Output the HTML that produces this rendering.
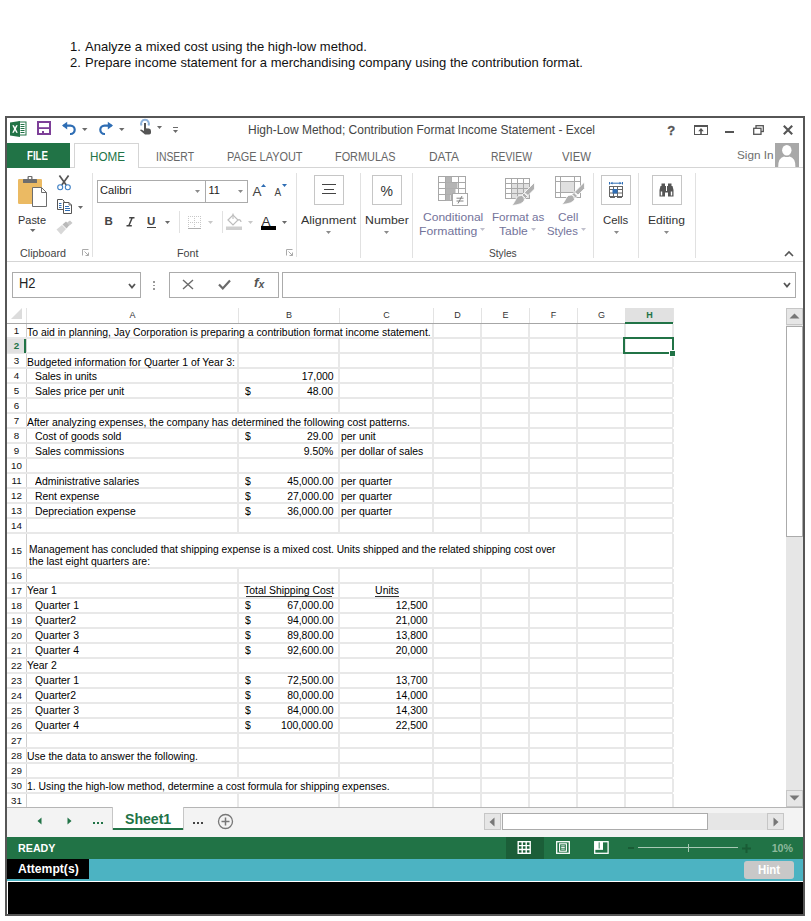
<!DOCTYPE html>
<html><head><meta charset="utf-8"><style>
html,body{margin:0;padding:0;}
body{width:811px;height:921px;position:relative;overflow:hidden;background:#fff;font-family:"Liberation Sans", sans-serif;color:#000;}
.t{position:absolute;white-space:nowrap;}
.r{position:absolute;}
svg.r{overflow:visible;}
</style></head><body>
<div class="t" style="left:70px;top:39.80px;font-size:13px;line-height:13px;color:#111;">1.</div>
<div class="t" style="left:85px;top:39.80px;font-size:13px;line-height:13px;color:#111;">Analyze a mixed cost using the high-low method.</div>
<div class="t" style="left:70px;top:55.80px;font-size:13px;line-height:13px;color:#111;">2.</div>
<div class="t" style="left:85px;top:55.80px;font-size:13px;line-height:13px;color:#111;">Prepare income statement for a merchandising company using the contribution format.</div>
<div class="r" style="left:5px;top:116px;width:800px;height:800px;box-sizing:border-box;border:2px solid #565656;background:#fff;"></div>
<div class="t" style="left:248px;top:123.84px;font-size:12px;line-height:12px;color:#444;transform:scaleX(0.9986);transform-origin:left top;">High-Low Method; Contribution Format Income Statement - Excel</div>
<div class="r" style="left:7px;top:167px;width:796px;height:1px;background:#d5d5d5;"></div>
<div class="r" style="left:7px;top:143px;width:63px;height:25px;background:#217346;"></div>
<div class="t" style="left:27px;top:150.34px;font-size:12px;line-height:12px;font-weight:bold;color:#fff;transform:scaleX(0.8077);transform-origin:left top;">FILE</div>
<div class="r" style="left:74px;top:143px;width:65px;height:25px;box-sizing:border-box;border:1px solid #d5d5d5;border-bottom:none;background:#fff;"></div>
<div class="t" style="left:89.5px;top:151.34px;font-size:12px;line-height:12px;color:#217346;transform:scaleX(0.9722);transform-origin:left top;">HOME</div>
<div class="t" style="left:155.5px;top:151.34px;font-size:12px;line-height:12px;color:#666;transform:scaleX(0.8676);transform-origin:left top;">INSERT</div>
<div class="t" style="left:226.8px;top:151.34px;font-size:12px;line-height:12px;color:#666;transform:scaleX(0.9105);transform-origin:left top;">PAGE LAYOUT</div>
<div class="t" style="left:335.3px;top:151.34px;font-size:12px;line-height:12px;color:#666;transform:scaleX(0.9072);transform-origin:left top;">FORMULAS</div>
<div class="t" style="left:428.8px;top:151.34px;font-size:12px;line-height:12px;color:#666;transform:scaleX(0.9922);transform-origin:left top;">DATA</div>
<div class="t" style="left:490.6px;top:151.34px;font-size:12px;line-height:12px;color:#666;transform:scaleX(0.8660);transform-origin:left top;">REVIEW</div>
<div class="t" style="left:562.2px;top:151.34px;font-size:12px;line-height:12px;color:#666;transform:scaleX(0.9455);transform-origin:left top;">VIEW</div>
<div class="r" style="left:7px;top:261px;width:796px;height:1px;background:#d5d5d5;"></div>
<div class="r" style="left:12px;top:272px;width:129px;height:26px;box-sizing:border-box;border:1px solid #ababab;background:#fff;"></div>
<div class="t" style="left:19.2px;top:276.15px;font-size:14px;line-height:14px;color:#222;transform:scaleX(0.9215);transform-origin:left top;">H2</div>
<div class="r" style="left:169px;top:272px;width:110px;height:26px;box-sizing:border-box;border:1px solid #ababab;background:#fff;"></div>
<div class="r" style="left:282px;top:272px;width:514px;height:26px;box-sizing:border-box;border:1px solid #ababab;background:#fff;"></div>
<div class="r" style="left:238px;top:308px;width:1px;height:15px;background:#e3e3e3;"></div>
<div class="r" style="left:339px;top:308px;width:1px;height:15px;background:#e3e3e3;"></div>
<div class="r" style="left:433px;top:308px;width:1px;height:15px;background:#e3e3e3;"></div>
<div class="r" style="left:481px;top:308px;width:1px;height:15px;background:#e3e3e3;"></div>
<div class="r" style="left:529px;top:308px;width:1px;height:15px;background:#e3e3e3;"></div>
<div class="r" style="left:577px;top:308px;width:1px;height:15px;background:#e3e3e3;"></div>
<div class="r" style="left:625px;top:308px;width:1px;height:15px;background:#e3e3e3;"></div>
<div class="r" style="left:673px;top:308px;width:1px;height:15px;background:#e3e3e3;"></div>
<div class="r" style="left:26px;top:308px;width:1px;height:15px;background:#e3e3e3;"></div>
<div class="r" style="left:26px;top:324px;width:1px;height:14px;background:#d0d0d0;"></div>
<div class="r" style="left:432px;top:324px;width:2px;height:13px;background:#e8e8e8;"></div>
<div class="r" style="left:480px;top:324px;width:2px;height:13px;background:#e8e8e8;"></div>
<div class="r" style="left:528px;top:324px;width:2px;height:13px;background:#e8e8e8;"></div>
<div class="r" style="left:576px;top:324px;width:2px;height:13px;background:#e8e8e8;"></div>
<div class="r" style="left:624px;top:324px;width:2px;height:13px;background:#e8e8e8;"></div>
<div class="r" style="left:672px;top:324px;width:2px;height:13px;background:#e8e8e8;"></div>
<div class="r" style="left:26px;top:339px;width:1px;height:14px;background:#d0d0d0;"></div>
<div class="r" style="left:237px;top:339px;width:2px;height:13px;background:#e8e8e8;"></div>
<div class="r" style="left:338px;top:339px;width:2px;height:13px;background:#e8e8e8;"></div>
<div class="r" style="left:432px;top:339px;width:2px;height:13px;background:#e8e8e8;"></div>
<div class="r" style="left:480px;top:339px;width:2px;height:13px;background:#e8e8e8;"></div>
<div class="r" style="left:528px;top:339px;width:2px;height:13px;background:#e8e8e8;"></div>
<div class="r" style="left:576px;top:339px;width:2px;height:13px;background:#e8e8e8;"></div>
<div class="r" style="left:624px;top:339px;width:2px;height:13px;background:#e8e8e8;"></div>
<div class="r" style="left:672px;top:339px;width:2px;height:13px;background:#e8e8e8;"></div>
<div class="r" style="left:26px;top:354px;width:1px;height:14px;background:#d0d0d0;"></div>
<div class="r" style="left:237px;top:354px;width:2px;height:13px;background:#e8e8e8;"></div>
<div class="r" style="left:338px;top:354px;width:2px;height:13px;background:#e8e8e8;"></div>
<div class="r" style="left:432px;top:354px;width:2px;height:13px;background:#e8e8e8;"></div>
<div class="r" style="left:480px;top:354px;width:2px;height:13px;background:#e8e8e8;"></div>
<div class="r" style="left:528px;top:354px;width:2px;height:13px;background:#e8e8e8;"></div>
<div class="r" style="left:576px;top:354px;width:2px;height:13px;background:#e8e8e8;"></div>
<div class="r" style="left:624px;top:354px;width:2px;height:13px;background:#e8e8e8;"></div>
<div class="r" style="left:672px;top:354px;width:2px;height:13px;background:#e8e8e8;"></div>
<div class="r" style="left:26px;top:369px;width:1px;height:14px;background:#d0d0d0;"></div>
<div class="r" style="left:237px;top:369px;width:2px;height:13px;background:#e8e8e8;"></div>
<div class="r" style="left:338px;top:369px;width:2px;height:13px;background:#e8e8e8;"></div>
<div class="r" style="left:432px;top:369px;width:2px;height:13px;background:#e8e8e8;"></div>
<div class="r" style="left:480px;top:369px;width:2px;height:13px;background:#e8e8e8;"></div>
<div class="r" style="left:528px;top:369px;width:2px;height:13px;background:#e8e8e8;"></div>
<div class="r" style="left:576px;top:369px;width:2px;height:13px;background:#e8e8e8;"></div>
<div class="r" style="left:624px;top:369px;width:2px;height:13px;background:#e8e8e8;"></div>
<div class="r" style="left:672px;top:369px;width:2px;height:13px;background:#e8e8e8;"></div>
<div class="r" style="left:26px;top:384px;width:1px;height:14px;background:#d0d0d0;"></div>
<div class="r" style="left:237px;top:384px;width:2px;height:13px;background:#e8e8e8;"></div>
<div class="r" style="left:338px;top:384px;width:2px;height:13px;background:#e8e8e8;"></div>
<div class="r" style="left:432px;top:384px;width:2px;height:13px;background:#e8e8e8;"></div>
<div class="r" style="left:480px;top:384px;width:2px;height:13px;background:#e8e8e8;"></div>
<div class="r" style="left:528px;top:384px;width:2px;height:13px;background:#e8e8e8;"></div>
<div class="r" style="left:576px;top:384px;width:2px;height:13px;background:#e8e8e8;"></div>
<div class="r" style="left:624px;top:384px;width:2px;height:13px;background:#e8e8e8;"></div>
<div class="r" style="left:672px;top:384px;width:2px;height:13px;background:#e8e8e8;"></div>
<div class="r" style="left:26px;top:399px;width:1px;height:14px;background:#d0d0d0;"></div>
<div class="r" style="left:237px;top:399px;width:2px;height:13px;background:#e8e8e8;"></div>
<div class="r" style="left:338px;top:399px;width:2px;height:13px;background:#e8e8e8;"></div>
<div class="r" style="left:432px;top:399px;width:2px;height:13px;background:#e8e8e8;"></div>
<div class="r" style="left:480px;top:399px;width:2px;height:13px;background:#e8e8e8;"></div>
<div class="r" style="left:528px;top:399px;width:2px;height:13px;background:#e8e8e8;"></div>
<div class="r" style="left:576px;top:399px;width:2px;height:13px;background:#e8e8e8;"></div>
<div class="r" style="left:624px;top:399px;width:2px;height:13px;background:#e8e8e8;"></div>
<div class="r" style="left:672px;top:399px;width:2px;height:13px;background:#e8e8e8;"></div>
<div class="r" style="left:26px;top:414px;width:1px;height:14px;background:#d0d0d0;"></div>
<div class="r" style="left:432px;top:414px;width:2px;height:13px;background:#e8e8e8;"></div>
<div class="r" style="left:480px;top:414px;width:2px;height:13px;background:#e8e8e8;"></div>
<div class="r" style="left:528px;top:414px;width:2px;height:13px;background:#e8e8e8;"></div>
<div class="r" style="left:576px;top:414px;width:2px;height:13px;background:#e8e8e8;"></div>
<div class="r" style="left:624px;top:414px;width:2px;height:13px;background:#e8e8e8;"></div>
<div class="r" style="left:672px;top:414px;width:2px;height:13px;background:#e8e8e8;"></div>
<div class="r" style="left:26px;top:429px;width:1px;height:14px;background:#d0d0d0;"></div>
<div class="r" style="left:237px;top:429px;width:2px;height:13px;background:#e8e8e8;"></div>
<div class="r" style="left:338px;top:429px;width:2px;height:13px;background:#e8e8e8;"></div>
<div class="r" style="left:432px;top:429px;width:2px;height:13px;background:#e8e8e8;"></div>
<div class="r" style="left:480px;top:429px;width:2px;height:13px;background:#e8e8e8;"></div>
<div class="r" style="left:528px;top:429px;width:2px;height:13px;background:#e8e8e8;"></div>
<div class="r" style="left:576px;top:429px;width:2px;height:13px;background:#e8e8e8;"></div>
<div class="r" style="left:624px;top:429px;width:2px;height:13px;background:#e8e8e8;"></div>
<div class="r" style="left:672px;top:429px;width:2px;height:13px;background:#e8e8e8;"></div>
<div class="r" style="left:26px;top:444px;width:1px;height:14px;background:#d0d0d0;"></div>
<div class="r" style="left:237px;top:444px;width:2px;height:13px;background:#e8e8e8;"></div>
<div class="r" style="left:338px;top:444px;width:2px;height:13px;background:#e8e8e8;"></div>
<div class="r" style="left:432px;top:444px;width:2px;height:13px;background:#e8e8e8;"></div>
<div class="r" style="left:480px;top:444px;width:2px;height:13px;background:#e8e8e8;"></div>
<div class="r" style="left:528px;top:444px;width:2px;height:13px;background:#e8e8e8;"></div>
<div class="r" style="left:576px;top:444px;width:2px;height:13px;background:#e8e8e8;"></div>
<div class="r" style="left:624px;top:444px;width:2px;height:13px;background:#e8e8e8;"></div>
<div class="r" style="left:672px;top:444px;width:2px;height:13px;background:#e8e8e8;"></div>
<div class="r" style="left:26px;top:459px;width:1px;height:14px;background:#d0d0d0;"></div>
<div class="r" style="left:237px;top:459px;width:2px;height:13px;background:#e8e8e8;"></div>
<div class="r" style="left:338px;top:459px;width:2px;height:13px;background:#e8e8e8;"></div>
<div class="r" style="left:432px;top:459px;width:2px;height:13px;background:#e8e8e8;"></div>
<div class="r" style="left:480px;top:459px;width:2px;height:13px;background:#e8e8e8;"></div>
<div class="r" style="left:528px;top:459px;width:2px;height:13px;background:#e8e8e8;"></div>
<div class="r" style="left:576px;top:459px;width:2px;height:13px;background:#e8e8e8;"></div>
<div class="r" style="left:624px;top:459px;width:2px;height:13px;background:#e8e8e8;"></div>
<div class="r" style="left:672px;top:459px;width:2px;height:13px;background:#e8e8e8;"></div>
<div class="r" style="left:26px;top:474px;width:1px;height:14px;background:#d0d0d0;"></div>
<div class="r" style="left:237px;top:474px;width:2px;height:13px;background:#e8e8e8;"></div>
<div class="r" style="left:338px;top:474px;width:2px;height:13px;background:#e8e8e8;"></div>
<div class="r" style="left:432px;top:474px;width:2px;height:13px;background:#e8e8e8;"></div>
<div class="r" style="left:480px;top:474px;width:2px;height:13px;background:#e8e8e8;"></div>
<div class="r" style="left:528px;top:474px;width:2px;height:13px;background:#e8e8e8;"></div>
<div class="r" style="left:576px;top:474px;width:2px;height:13px;background:#e8e8e8;"></div>
<div class="r" style="left:624px;top:474px;width:2px;height:13px;background:#e8e8e8;"></div>
<div class="r" style="left:672px;top:474px;width:2px;height:13px;background:#e8e8e8;"></div>
<div class="r" style="left:26px;top:489px;width:1px;height:14px;background:#d0d0d0;"></div>
<div class="r" style="left:237px;top:489px;width:2px;height:13px;background:#e8e8e8;"></div>
<div class="r" style="left:338px;top:489px;width:2px;height:13px;background:#e8e8e8;"></div>
<div class="r" style="left:432px;top:489px;width:2px;height:13px;background:#e8e8e8;"></div>
<div class="r" style="left:480px;top:489px;width:2px;height:13px;background:#e8e8e8;"></div>
<div class="r" style="left:528px;top:489px;width:2px;height:13px;background:#e8e8e8;"></div>
<div class="r" style="left:576px;top:489px;width:2px;height:13px;background:#e8e8e8;"></div>
<div class="r" style="left:624px;top:489px;width:2px;height:13px;background:#e8e8e8;"></div>
<div class="r" style="left:672px;top:489px;width:2px;height:13px;background:#e8e8e8;"></div>
<div class="r" style="left:26px;top:504px;width:1px;height:14px;background:#d0d0d0;"></div>
<div class="r" style="left:237px;top:504px;width:2px;height:13px;background:#e8e8e8;"></div>
<div class="r" style="left:338px;top:504px;width:2px;height:13px;background:#e8e8e8;"></div>
<div class="r" style="left:432px;top:504px;width:2px;height:13px;background:#e8e8e8;"></div>
<div class="r" style="left:480px;top:504px;width:2px;height:13px;background:#e8e8e8;"></div>
<div class="r" style="left:528px;top:504px;width:2px;height:13px;background:#e8e8e8;"></div>
<div class="r" style="left:576px;top:504px;width:2px;height:13px;background:#e8e8e8;"></div>
<div class="r" style="left:624px;top:504px;width:2px;height:13px;background:#e8e8e8;"></div>
<div class="r" style="left:672px;top:504px;width:2px;height:13px;background:#e8e8e8;"></div>
<div class="r" style="left:26px;top:519px;width:1px;height:14px;background:#d0d0d0;"></div>
<div class="r" style="left:237px;top:519px;width:2px;height:13px;background:#e8e8e8;"></div>
<div class="r" style="left:338px;top:519px;width:2px;height:13px;background:#e8e8e8;"></div>
<div class="r" style="left:432px;top:519px;width:2px;height:13px;background:#e8e8e8;"></div>
<div class="r" style="left:480px;top:519px;width:2px;height:13px;background:#e8e8e8;"></div>
<div class="r" style="left:528px;top:519px;width:2px;height:13px;background:#e8e8e8;"></div>
<div class="r" style="left:576px;top:519px;width:2px;height:13px;background:#e8e8e8;"></div>
<div class="r" style="left:624px;top:519px;width:2px;height:13px;background:#e8e8e8;"></div>
<div class="r" style="left:672px;top:519px;width:2px;height:13px;background:#e8e8e8;"></div>
<div class="r" style="left:26px;top:534px;width:1px;height:34px;background:#d0d0d0;"></div>
<div class="r" style="left:576px;top:534px;width:2px;height:33px;background:#e8e8e8;"></div>
<div class="r" style="left:624px;top:534px;width:2px;height:33px;background:#e8e8e8;"></div>
<div class="r" style="left:672px;top:534px;width:2px;height:33px;background:#e8e8e8;"></div>
<div class="r" style="left:26px;top:569px;width:1px;height:14px;background:#d0d0d0;"></div>
<div class="r" style="left:237px;top:569px;width:2px;height:13px;background:#e8e8e8;"></div>
<div class="r" style="left:338px;top:569px;width:2px;height:13px;background:#e8e8e8;"></div>
<div class="r" style="left:432px;top:569px;width:2px;height:13px;background:#e8e8e8;"></div>
<div class="r" style="left:480px;top:569px;width:2px;height:13px;background:#e8e8e8;"></div>
<div class="r" style="left:528px;top:569px;width:2px;height:13px;background:#e8e8e8;"></div>
<div class="r" style="left:576px;top:569px;width:2px;height:13px;background:#e8e8e8;"></div>
<div class="r" style="left:624px;top:569px;width:2px;height:13px;background:#e8e8e8;"></div>
<div class="r" style="left:672px;top:569px;width:2px;height:13px;background:#e8e8e8;"></div>
<div class="r" style="left:26px;top:584px;width:1px;height:14px;background:#d0d0d0;"></div>
<div class="r" style="left:237px;top:584px;width:2px;height:13px;background:#e8e8e8;"></div>
<div class="r" style="left:338px;top:584px;width:2px;height:13px;background:#e8e8e8;"></div>
<div class="r" style="left:432px;top:584px;width:2px;height:13px;background:#e8e8e8;"></div>
<div class="r" style="left:480px;top:584px;width:2px;height:13px;background:#e8e8e8;"></div>
<div class="r" style="left:528px;top:584px;width:2px;height:13px;background:#e8e8e8;"></div>
<div class="r" style="left:576px;top:584px;width:2px;height:13px;background:#e8e8e8;"></div>
<div class="r" style="left:624px;top:584px;width:2px;height:13px;background:#e8e8e8;"></div>
<div class="r" style="left:672px;top:584px;width:2px;height:13px;background:#e8e8e8;"></div>
<div class="r" style="left:26px;top:599px;width:1px;height:14px;background:#d0d0d0;"></div>
<div class="r" style="left:237px;top:599px;width:2px;height:13px;background:#e8e8e8;"></div>
<div class="r" style="left:338px;top:599px;width:2px;height:13px;background:#e8e8e8;"></div>
<div class="r" style="left:432px;top:599px;width:2px;height:13px;background:#e8e8e8;"></div>
<div class="r" style="left:480px;top:599px;width:2px;height:13px;background:#e8e8e8;"></div>
<div class="r" style="left:528px;top:599px;width:2px;height:13px;background:#e8e8e8;"></div>
<div class="r" style="left:576px;top:599px;width:2px;height:13px;background:#e8e8e8;"></div>
<div class="r" style="left:624px;top:599px;width:2px;height:13px;background:#e8e8e8;"></div>
<div class="r" style="left:672px;top:599px;width:2px;height:13px;background:#e8e8e8;"></div>
<div class="r" style="left:26px;top:614px;width:1px;height:14px;background:#d0d0d0;"></div>
<div class="r" style="left:237px;top:614px;width:2px;height:13px;background:#e8e8e8;"></div>
<div class="r" style="left:338px;top:614px;width:2px;height:13px;background:#e8e8e8;"></div>
<div class="r" style="left:432px;top:614px;width:2px;height:13px;background:#e8e8e8;"></div>
<div class="r" style="left:480px;top:614px;width:2px;height:13px;background:#e8e8e8;"></div>
<div class="r" style="left:528px;top:614px;width:2px;height:13px;background:#e8e8e8;"></div>
<div class="r" style="left:576px;top:614px;width:2px;height:13px;background:#e8e8e8;"></div>
<div class="r" style="left:624px;top:614px;width:2px;height:13px;background:#e8e8e8;"></div>
<div class="r" style="left:672px;top:614px;width:2px;height:13px;background:#e8e8e8;"></div>
<div class="r" style="left:26px;top:629px;width:1px;height:14px;background:#d0d0d0;"></div>
<div class="r" style="left:237px;top:629px;width:2px;height:13px;background:#e8e8e8;"></div>
<div class="r" style="left:338px;top:629px;width:2px;height:13px;background:#e8e8e8;"></div>
<div class="r" style="left:432px;top:629px;width:2px;height:13px;background:#e8e8e8;"></div>
<div class="r" style="left:480px;top:629px;width:2px;height:13px;background:#e8e8e8;"></div>
<div class="r" style="left:528px;top:629px;width:2px;height:13px;background:#e8e8e8;"></div>
<div class="r" style="left:576px;top:629px;width:2px;height:13px;background:#e8e8e8;"></div>
<div class="r" style="left:624px;top:629px;width:2px;height:13px;background:#e8e8e8;"></div>
<div class="r" style="left:672px;top:629px;width:2px;height:13px;background:#e8e8e8;"></div>
<div class="r" style="left:26px;top:644px;width:1px;height:14px;background:#d0d0d0;"></div>
<div class="r" style="left:237px;top:644px;width:2px;height:13px;background:#e8e8e8;"></div>
<div class="r" style="left:338px;top:644px;width:2px;height:13px;background:#e8e8e8;"></div>
<div class="r" style="left:432px;top:644px;width:2px;height:13px;background:#e8e8e8;"></div>
<div class="r" style="left:480px;top:644px;width:2px;height:13px;background:#e8e8e8;"></div>
<div class="r" style="left:528px;top:644px;width:2px;height:13px;background:#e8e8e8;"></div>
<div class="r" style="left:576px;top:644px;width:2px;height:13px;background:#e8e8e8;"></div>
<div class="r" style="left:624px;top:644px;width:2px;height:13px;background:#e8e8e8;"></div>
<div class="r" style="left:672px;top:644px;width:2px;height:13px;background:#e8e8e8;"></div>
<div class="r" style="left:26px;top:659px;width:1px;height:14px;background:#d0d0d0;"></div>
<div class="r" style="left:237px;top:659px;width:2px;height:13px;background:#e8e8e8;"></div>
<div class="r" style="left:338px;top:659px;width:2px;height:13px;background:#e8e8e8;"></div>
<div class="r" style="left:432px;top:659px;width:2px;height:13px;background:#e8e8e8;"></div>
<div class="r" style="left:480px;top:659px;width:2px;height:13px;background:#e8e8e8;"></div>
<div class="r" style="left:528px;top:659px;width:2px;height:13px;background:#e8e8e8;"></div>
<div class="r" style="left:576px;top:659px;width:2px;height:13px;background:#e8e8e8;"></div>
<div class="r" style="left:624px;top:659px;width:2px;height:13px;background:#e8e8e8;"></div>
<div class="r" style="left:672px;top:659px;width:2px;height:13px;background:#e8e8e8;"></div>
<div class="r" style="left:26px;top:674px;width:1px;height:14px;background:#d0d0d0;"></div>
<div class="r" style="left:237px;top:674px;width:2px;height:13px;background:#e8e8e8;"></div>
<div class="r" style="left:338px;top:674px;width:2px;height:13px;background:#e8e8e8;"></div>
<div class="r" style="left:432px;top:674px;width:2px;height:13px;background:#e8e8e8;"></div>
<div class="r" style="left:480px;top:674px;width:2px;height:13px;background:#e8e8e8;"></div>
<div class="r" style="left:528px;top:674px;width:2px;height:13px;background:#e8e8e8;"></div>
<div class="r" style="left:576px;top:674px;width:2px;height:13px;background:#e8e8e8;"></div>
<div class="r" style="left:624px;top:674px;width:2px;height:13px;background:#e8e8e8;"></div>
<div class="r" style="left:672px;top:674px;width:2px;height:13px;background:#e8e8e8;"></div>
<div class="r" style="left:26px;top:689px;width:1px;height:14px;background:#d0d0d0;"></div>
<div class="r" style="left:237px;top:689px;width:2px;height:13px;background:#e8e8e8;"></div>
<div class="r" style="left:338px;top:689px;width:2px;height:13px;background:#e8e8e8;"></div>
<div class="r" style="left:432px;top:689px;width:2px;height:13px;background:#e8e8e8;"></div>
<div class="r" style="left:480px;top:689px;width:2px;height:13px;background:#e8e8e8;"></div>
<div class="r" style="left:528px;top:689px;width:2px;height:13px;background:#e8e8e8;"></div>
<div class="r" style="left:576px;top:689px;width:2px;height:13px;background:#e8e8e8;"></div>
<div class="r" style="left:624px;top:689px;width:2px;height:13px;background:#e8e8e8;"></div>
<div class="r" style="left:672px;top:689px;width:2px;height:13px;background:#e8e8e8;"></div>
<div class="r" style="left:26px;top:704px;width:1px;height:14px;background:#d0d0d0;"></div>
<div class="r" style="left:237px;top:704px;width:2px;height:13px;background:#e8e8e8;"></div>
<div class="r" style="left:338px;top:704px;width:2px;height:13px;background:#e8e8e8;"></div>
<div class="r" style="left:432px;top:704px;width:2px;height:13px;background:#e8e8e8;"></div>
<div class="r" style="left:480px;top:704px;width:2px;height:13px;background:#e8e8e8;"></div>
<div class="r" style="left:528px;top:704px;width:2px;height:13px;background:#e8e8e8;"></div>
<div class="r" style="left:576px;top:704px;width:2px;height:13px;background:#e8e8e8;"></div>
<div class="r" style="left:624px;top:704px;width:2px;height:13px;background:#e8e8e8;"></div>
<div class="r" style="left:672px;top:704px;width:2px;height:13px;background:#e8e8e8;"></div>
<div class="r" style="left:26px;top:719px;width:1px;height:14px;background:#d0d0d0;"></div>
<div class="r" style="left:237px;top:719px;width:2px;height:13px;background:#e8e8e8;"></div>
<div class="r" style="left:338px;top:719px;width:2px;height:13px;background:#e8e8e8;"></div>
<div class="r" style="left:432px;top:719px;width:2px;height:13px;background:#e8e8e8;"></div>
<div class="r" style="left:480px;top:719px;width:2px;height:13px;background:#e8e8e8;"></div>
<div class="r" style="left:528px;top:719px;width:2px;height:13px;background:#e8e8e8;"></div>
<div class="r" style="left:576px;top:719px;width:2px;height:13px;background:#e8e8e8;"></div>
<div class="r" style="left:624px;top:719px;width:2px;height:13px;background:#e8e8e8;"></div>
<div class="r" style="left:672px;top:719px;width:2px;height:13px;background:#e8e8e8;"></div>
<div class="r" style="left:26px;top:734px;width:1px;height:14px;background:#d0d0d0;"></div>
<div class="r" style="left:237px;top:734px;width:2px;height:13px;background:#e8e8e8;"></div>
<div class="r" style="left:338px;top:734px;width:2px;height:13px;background:#e8e8e8;"></div>
<div class="r" style="left:432px;top:734px;width:2px;height:13px;background:#e8e8e8;"></div>
<div class="r" style="left:480px;top:734px;width:2px;height:13px;background:#e8e8e8;"></div>
<div class="r" style="left:528px;top:734px;width:2px;height:13px;background:#e8e8e8;"></div>
<div class="r" style="left:576px;top:734px;width:2px;height:13px;background:#e8e8e8;"></div>
<div class="r" style="left:624px;top:734px;width:2px;height:13px;background:#e8e8e8;"></div>
<div class="r" style="left:672px;top:734px;width:2px;height:13px;background:#e8e8e8;"></div>
<div class="r" style="left:26px;top:749px;width:1px;height:14px;background:#d0d0d0;"></div>
<div class="r" style="left:237px;top:749px;width:2px;height:13px;background:#e8e8e8;"></div>
<div class="r" style="left:338px;top:749px;width:2px;height:13px;background:#e8e8e8;"></div>
<div class="r" style="left:432px;top:749px;width:2px;height:13px;background:#e8e8e8;"></div>
<div class="r" style="left:480px;top:749px;width:2px;height:13px;background:#e8e8e8;"></div>
<div class="r" style="left:528px;top:749px;width:2px;height:13px;background:#e8e8e8;"></div>
<div class="r" style="left:576px;top:749px;width:2px;height:13px;background:#e8e8e8;"></div>
<div class="r" style="left:624px;top:749px;width:2px;height:13px;background:#e8e8e8;"></div>
<div class="r" style="left:672px;top:749px;width:2px;height:13px;background:#e8e8e8;"></div>
<div class="r" style="left:26px;top:764px;width:1px;height:14px;background:#d0d0d0;"></div>
<div class="r" style="left:237px;top:764px;width:2px;height:13px;background:#e8e8e8;"></div>
<div class="r" style="left:338px;top:764px;width:2px;height:13px;background:#e8e8e8;"></div>
<div class="r" style="left:432px;top:764px;width:2px;height:13px;background:#e8e8e8;"></div>
<div class="r" style="left:480px;top:764px;width:2px;height:13px;background:#e8e8e8;"></div>
<div class="r" style="left:528px;top:764px;width:2px;height:13px;background:#e8e8e8;"></div>
<div class="r" style="left:576px;top:764px;width:2px;height:13px;background:#e8e8e8;"></div>
<div class="r" style="left:624px;top:764px;width:2px;height:13px;background:#e8e8e8;"></div>
<div class="r" style="left:672px;top:764px;width:2px;height:13px;background:#e8e8e8;"></div>
<div class="r" style="left:26px;top:779px;width:1px;height:14px;background:#d0d0d0;"></div>
<div class="r" style="left:432px;top:779px;width:2px;height:13px;background:#e8e8e8;"></div>
<div class="r" style="left:480px;top:779px;width:2px;height:13px;background:#e8e8e8;"></div>
<div class="r" style="left:528px;top:779px;width:2px;height:13px;background:#e8e8e8;"></div>
<div class="r" style="left:576px;top:779px;width:2px;height:13px;background:#e8e8e8;"></div>
<div class="r" style="left:624px;top:779px;width:2px;height:13px;background:#e8e8e8;"></div>
<div class="r" style="left:672px;top:779px;width:2px;height:13px;background:#e8e8e8;"></div>
<div class="r" style="left:26px;top:794px;width:1px;height:14px;background:#d0d0d0;"></div>
<div class="r" style="left:237px;top:794px;width:2px;height:13px;background:#e8e8e8;"></div>
<div class="r" style="left:338px;top:794px;width:2px;height:13px;background:#e8e8e8;"></div>
<div class="r" style="left:432px;top:794px;width:2px;height:13px;background:#e8e8e8;"></div>
<div class="r" style="left:480px;top:794px;width:2px;height:13px;background:#e8e8e8;"></div>
<div class="r" style="left:528px;top:794px;width:2px;height:13px;background:#e8e8e8;"></div>
<div class="r" style="left:576px;top:794px;width:2px;height:13px;background:#e8e8e8;"></div>
<div class="r" style="left:624px;top:794px;width:2px;height:13px;background:#e8e8e8;"></div>
<div class="r" style="left:672px;top:794px;width:2px;height:13px;background:#e8e8e8;"></div>
<div class="r" style="left:7px;top:337px;width:666px;height:2px;background:#e8e8e8;"></div>
<div class="r" style="left:7px;top:352px;width:666px;height:2px;background:#e8e8e8;"></div>
<div class="r" style="left:7px;top:367px;width:666px;height:2px;background:#e8e8e8;"></div>
<div class="r" style="left:7px;top:382px;width:666px;height:2px;background:#e8e8e8;"></div>
<div class="r" style="left:7px;top:397px;width:666px;height:2px;background:#e8e8e8;"></div>
<div class="r" style="left:7px;top:412px;width:666px;height:2px;background:#e8e8e8;"></div>
<div class="r" style="left:7px;top:427px;width:666px;height:2px;background:#e8e8e8;"></div>
<div class="r" style="left:7px;top:442px;width:666px;height:2px;background:#e8e8e8;"></div>
<div class="r" style="left:7px;top:457px;width:666px;height:2px;background:#e8e8e8;"></div>
<div class="r" style="left:7px;top:472px;width:666px;height:2px;background:#e8e8e8;"></div>
<div class="r" style="left:7px;top:487px;width:666px;height:2px;background:#e8e8e8;"></div>
<div class="r" style="left:7px;top:502px;width:666px;height:2px;background:#e8e8e8;"></div>
<div class="r" style="left:7px;top:517px;width:666px;height:2px;background:#e8e8e8;"></div>
<div class="r" style="left:7px;top:532px;width:666px;height:2px;background:#e8e8e8;"></div>
<div class="r" style="left:7px;top:567px;width:666px;height:2px;background:#e8e8e8;"></div>
<div class="r" style="left:7px;top:582px;width:666px;height:2px;background:#e8e8e8;"></div>
<div class="r" style="left:7px;top:597px;width:666px;height:2px;background:#e8e8e8;"></div>
<div class="r" style="left:7px;top:612px;width:666px;height:2px;background:#e8e8e8;"></div>
<div class="r" style="left:7px;top:627px;width:666px;height:2px;background:#e8e8e8;"></div>
<div class="r" style="left:7px;top:642px;width:666px;height:2px;background:#e8e8e8;"></div>
<div class="r" style="left:7px;top:657px;width:666px;height:2px;background:#e8e8e8;"></div>
<div class="r" style="left:7px;top:672px;width:666px;height:2px;background:#e8e8e8;"></div>
<div class="r" style="left:7px;top:687px;width:666px;height:2px;background:#e8e8e8;"></div>
<div class="r" style="left:7px;top:702px;width:666px;height:2px;background:#e8e8e8;"></div>
<div class="r" style="left:7px;top:717px;width:666px;height:2px;background:#e8e8e8;"></div>
<div class="r" style="left:7px;top:732px;width:666px;height:2px;background:#e8e8e8;"></div>
<div class="r" style="left:7px;top:747px;width:666px;height:2px;background:#e8e8e8;"></div>
<div class="r" style="left:7px;top:762px;width:666px;height:2px;background:#e8e8e8;"></div>
<div class="r" style="left:7px;top:777px;width:666px;height:2px;background:#e8e8e8;"></div>
<div class="r" style="left:7px;top:792px;width:666px;height:2px;background:#e8e8e8;"></div>
<div class="r" style="left:7px;top:323px;width:666px;height:1px;background:#a6a6a6;"></div>
<div class="r" style="left:625px;top:308px;width:48px;height:15px;background:#e1e1e1;"></div>
<div class="r" style="left:625px;top:322px;width:48px;height:2px;background:#217346;"></div>
<div class="r" style="left:7px;top:339px;width:19px;height:14px;background:#e1e1e1;"></div>
<div class="r" style="left:24px;top:339px;width:2px;height:14px;background:#217346;"></div>
<svg class="r" style="left:11px;top:308px" width="11" height="11" viewBox="0 0 11 11"><path d="M11 0 L11 11 L0 11 Z" fill="#dcdcdc"/></svg>
<div class="t" style="left:112.50px;width:40px;top:311.18px;font-size:9px;line-height:9px;text-align:center;color:#333;">A</div>
<div class="t" style="left:269.00px;width:40px;top:311.18px;font-size:9px;line-height:9px;text-align:center;color:#333;">B</div>
<div class="t" style="left:366.50px;width:40px;top:311.18px;font-size:9px;line-height:9px;text-align:center;color:#333;">C</div>
<div class="t" style="left:437.50px;width:40px;top:311.18px;font-size:9px;line-height:9px;text-align:center;color:#333;">D</div>
<div class="t" style="left:485.50px;width:40px;top:311.18px;font-size:9px;line-height:9px;text-align:center;color:#333;">E</div>
<div class="t" style="left:533.50px;width:40px;top:311.18px;font-size:9px;line-height:9px;text-align:center;color:#333;">F</div>
<div class="t" style="left:581.50px;width:40px;top:311.18px;font-size:9px;line-height:9px;text-align:center;color:#333;">G</div>
<div class="t" style="left:629.50px;width:40px;top:311.18px;font-size:9px;line-height:9px;text-align:center;font-weight:bold;color:#217346;">H</div>
<div class="t" style="left:6.50px;width:20px;top:325.90px;font-size:9.8px;line-height:9.8px;text-align:center;color:#111;">1</div>
<div class="t" style="left:6.50px;width:20px;top:340.90px;font-size:9.8px;line-height:9.8px;text-align:center;font-weight:bold;color:#217346;">2</div>
<div class="t" style="left:6.50px;width:20px;top:355.90px;font-size:9.8px;line-height:9.8px;text-align:center;color:#111;">3</div>
<div class="t" style="left:6.50px;width:20px;top:370.90px;font-size:9.8px;line-height:9.8px;text-align:center;color:#111;">4</div>
<div class="t" style="left:6.50px;width:20px;top:385.90px;font-size:9.8px;line-height:9.8px;text-align:center;color:#111;">5</div>
<div class="t" style="left:6.50px;width:20px;top:400.90px;font-size:9.8px;line-height:9.8px;text-align:center;color:#111;">6</div>
<div class="t" style="left:6.50px;width:20px;top:415.90px;font-size:9.8px;line-height:9.8px;text-align:center;color:#111;">7</div>
<div class="t" style="left:6.50px;width:20px;top:430.90px;font-size:9.8px;line-height:9.8px;text-align:center;color:#111;">8</div>
<div class="t" style="left:6.50px;width:20px;top:445.90px;font-size:9.8px;line-height:9.8px;text-align:center;color:#111;">9</div>
<div class="t" style="left:6.50px;width:20px;top:460.90px;font-size:9.8px;line-height:9.8px;text-align:center;color:#111;">10</div>
<div class="t" style="left:6.50px;width:20px;top:475.90px;font-size:9.8px;line-height:9.8px;text-align:center;color:#111;">11</div>
<div class="t" style="left:6.50px;width:20px;top:490.90px;font-size:9.8px;line-height:9.8px;text-align:center;color:#111;">12</div>
<div class="t" style="left:6.50px;width:20px;top:505.90px;font-size:9.8px;line-height:9.8px;text-align:center;color:#111;">13</div>
<div class="t" style="left:6.50px;width:20px;top:520.90px;font-size:9.8px;line-height:9.8px;text-align:center;color:#111;">14</div>
<div class="t" style="left:6.50px;width:20px;top:545.90px;font-size:9.8px;line-height:9.8px;text-align:center;color:#111;">15</div>
<div class="t" style="left:6.50px;width:20px;top:570.90px;font-size:9.8px;line-height:9.8px;text-align:center;color:#111;">16</div>
<div class="t" style="left:6.50px;width:20px;top:585.90px;font-size:9.8px;line-height:9.8px;text-align:center;color:#111;">17</div>
<div class="t" style="left:6.50px;width:20px;top:600.90px;font-size:9.8px;line-height:9.8px;text-align:center;color:#111;">18</div>
<div class="t" style="left:6.50px;width:20px;top:615.90px;font-size:9.8px;line-height:9.8px;text-align:center;color:#111;">19</div>
<div class="t" style="left:6.50px;width:20px;top:630.90px;font-size:9.8px;line-height:9.8px;text-align:center;color:#111;">20</div>
<div class="t" style="left:6.50px;width:20px;top:645.90px;font-size:9.8px;line-height:9.8px;text-align:center;color:#111;">21</div>
<div class="t" style="left:6.50px;width:20px;top:660.90px;font-size:9.8px;line-height:9.8px;text-align:center;color:#111;">22</div>
<div class="t" style="left:6.50px;width:20px;top:675.90px;font-size:9.8px;line-height:9.8px;text-align:center;color:#111;">23</div>
<div class="t" style="left:6.50px;width:20px;top:690.90px;font-size:9.8px;line-height:9.8px;text-align:center;color:#111;">24</div>
<div class="t" style="left:6.50px;width:20px;top:705.90px;font-size:9.8px;line-height:9.8px;text-align:center;color:#111;">25</div>
<div class="t" style="left:6.50px;width:20px;top:720.90px;font-size:9.8px;line-height:9.8px;text-align:center;color:#111;">26</div>
<div class="t" style="left:6.50px;width:20px;top:735.90px;font-size:9.8px;line-height:9.8px;text-align:center;color:#111;">27</div>
<div class="t" style="left:6.50px;width:20px;top:750.90px;font-size:9.8px;line-height:9.8px;text-align:center;color:#111;">28</div>
<div class="t" style="left:6.50px;width:20px;top:765.90px;font-size:9.8px;line-height:9.8px;text-align:center;color:#111;">29</div>
<div class="t" style="left:6.50px;width:20px;top:780.90px;font-size:9.8px;line-height:9.8px;text-align:center;color:#111;">30</div>
<div class="t" style="left:6.50px;width:20px;top:795.90px;font-size:9.8px;line-height:9.8px;text-align:center;color:#111;">31</div>
<div class="r" style="left:623px;top:337px;width:51px;height:17px;box-sizing:border-box;border:2px solid #217346;"></div>
<div class="r" style="left:669px;top:350px;width:5px;height:5px;background:#217346;border:1px solid #fff;box-sizing:content-box;"></div>
<div class="t" style="left:27.2px;top:328.04px;font-size:10px;line-height:10px;color:#000;transform:scaleX(1.042);transform-origin:left top;">To aid in planning, Jay Corporation is preparing a contribution format income statement.</div>
<div class="t" style="left:27.2px;top:358.13px;font-size:10px;line-height:10px;color:#000;transform:scaleX(1.042);transform-origin:left top;">Budgeted information for Quarter 1 of Year 3:</div>
<div class="t" style="left:35.2px;top:372.04px;font-size:10px;line-height:10px;color:#000;transform:scaleX(1.042);transform-origin:left top;">Sales in units</div>
<div class="t" style="right:477.5px;top:372.04px;font-size:10px;line-height:10px;text-align:right;color:#000;transform:scaleX(1.042);transform-origin:right top;">17,000</div>
<div class="t" style="left:35.2px;top:387.13px;font-size:10px;line-height:10px;color:#000;transform:scaleX(1.042);transform-origin:left top;">Sales price per unit</div>
<div class="t" style="left:244.5px;top:387.13px;font-size:10px;line-height:10px;color:#000;transform:scaleX(1.042);transform-origin:left top;">$</div>
<div class="t" style="right:477.5px;top:387.13px;font-size:10px;line-height:10px;text-align:right;color:#000;transform:scaleX(1.042);transform-origin:right top;">48.00</div>
<div class="t" style="left:27.2px;top:418.04px;font-size:10px;line-height:10px;color:#000;transform:scaleX(1.042);transform-origin:left top;">After analyzing expenses, the company has determined the following cost patterns.</div>
<div class="t" style="left:35.2px;top:432.04px;font-size:10px;line-height:10px;color:#000;transform:scaleX(1.042);transform-origin:left top;">Cost of goods sold</div>
<div class="t" style="left:244.5px;top:432.04px;font-size:10px;line-height:10px;color:#000;transform:scaleX(1.042);transform-origin:left top;">$</div>
<div class="t" style="right:477.5px;top:432.04px;font-size:10px;line-height:10px;text-align:right;color:#000;transform:scaleX(1.042);transform-origin:right top;">29.00</div>
<div class="t" style="left:341px;top:432.04px;font-size:10px;line-height:10px;color:#000;transform:scaleX(1.042);transform-origin:left top;">per unit</div>
<div class="t" style="left:35.2px;top:447.04px;font-size:10px;line-height:10px;color:#000;transform:scaleX(1.042);transform-origin:left top;">Sales commissions</div>
<div class="t" style="right:477.5px;top:447.04px;font-size:10px;line-height:10px;text-align:right;color:#000;transform:scaleX(1.042);transform-origin:right top;">9.50%</div>
<div class="t" style="left:341px;top:447.04px;font-size:10px;line-height:10px;color:#000;transform:scaleX(1.042);transform-origin:left top;">per dollar of sales</div>
<div class="t" style="left:35.2px;top:476.74px;font-size:10px;line-height:10px;color:#000;transform:scaleX(1.042);transform-origin:left top;">Administrative salaries</div>
<div class="t" style="left:244.5px;top:476.74px;font-size:10px;line-height:10px;color:#000;transform:scaleX(1.042);transform-origin:left top;">$</div>
<div class="t" style="right:477.5px;top:476.74px;font-size:10px;line-height:10px;text-align:right;color:#000;transform:scaleX(1.042);transform-origin:right top;">45,000.00</div>
<div class="t" style="left:341px;top:476.74px;font-size:10px;line-height:10px;color:#000;transform:scaleX(1.042);transform-origin:left top;">per quarter</div>
<div class="t" style="left:35.2px;top:491.84px;font-size:10px;line-height:10px;color:#000;transform:scaleX(1.042);transform-origin:left top;">Rent expense</div>
<div class="t" style="left:244.5px;top:491.84px;font-size:10px;line-height:10px;color:#000;transform:scaleX(1.042);transform-origin:left top;">$</div>
<div class="t" style="right:477.5px;top:491.84px;font-size:10px;line-height:10px;text-align:right;color:#000;transform:scaleX(1.042);transform-origin:right top;">27,000.00</div>
<div class="t" style="left:341px;top:491.84px;font-size:10px;line-height:10px;color:#000;transform:scaleX(1.042);transform-origin:left top;">per quarter</div>
<div class="t" style="left:35.2px;top:506.54px;font-size:10px;line-height:10px;color:#000;transform:scaleX(1.042);transform-origin:left top;">Depreciation expense</div>
<div class="t" style="left:244.5px;top:506.54px;font-size:10px;line-height:10px;color:#000;transform:scaleX(1.042);transform-origin:left top;">$</div>
<div class="t" style="right:477.5px;top:506.54px;font-size:10px;line-height:10px;text-align:right;color:#000;transform:scaleX(1.042);transform-origin:right top;">36,000.00</div>
<div class="t" style="left:341px;top:506.54px;font-size:10px;line-height:10px;color:#000;transform:scaleX(1.042);transform-origin:left top;">per quarter</div>
<div class="t" style="left:28.6px;top:544.53px;font-size:10px;line-height:10px;color:#000;transform:scaleX(1.025);transform-origin:left top;">Management has concluded that shipping expense is a mixed cost. Units shipped and the related shipping cost over</div>
<div class="t" style="left:28.6px;top:557.03px;font-size:10px;line-height:10px;color:#000;transform:scaleX(1.042);transform-origin:left top;">the last eight quarters are:</div>
<div class="t" style="left:27.2px;top:586.13px;font-size:10px;line-height:10px;color:#000;transform:scaleX(1.042);transform-origin:left top;">Year 1</div>
<div class="t" style="left:239.00px;width:100px;top:586.13px;font-size:10px;line-height:10px;text-align:center;color:#000;transform:scaleX(1.042);transform-origin:center top;">Total Shipping Cost</div>
<div class="t" style="left:346.50px;width:80px;top:586.13px;font-size:10px;line-height:10px;text-align:center;color:#000;transform:scaleX(1.042);transform-origin:center top;">Units</div>
<div class="r" style="left:246px;top:596px;width:86px;height:1px;background:#333;"></div>
<div class="r" style="left:375px;top:596px;width:24px;height:1px;background:#333;"></div>
<div class="t" style="left:35.2px;top:600.84px;font-size:10px;line-height:10px;color:#000;transform:scaleX(1.042);transform-origin:left top;">Quarter 1</div>
<div class="t" style="left:244.5px;top:600.84px;font-size:10px;line-height:10px;color:#000;transform:scaleX(1.042);transform-origin:left top;">$</div>
<div class="t" style="right:477.5px;top:600.84px;font-size:10px;line-height:10px;text-align:right;color:#000;transform:scaleX(1.042);transform-origin:right top;">67,000.00</div>
<div class="t" style="right:383.5px;top:600.84px;font-size:10px;line-height:10px;text-align:right;color:#000;transform:scaleX(1.042);transform-origin:right top;">12,500</div>
<div class="t" style="left:35.2px;top:615.63px;font-size:10px;line-height:10px;color:#000;transform:scaleX(1.042);transform-origin:left top;">Quarter2</div>
<div class="t" style="left:244.5px;top:615.63px;font-size:10px;line-height:10px;color:#000;transform:scaleX(1.042);transform-origin:left top;">$</div>
<div class="t" style="right:477.5px;top:615.63px;font-size:10px;line-height:10px;text-align:right;color:#000;transform:scaleX(1.042);transform-origin:right top;">94,000.00</div>
<div class="t" style="right:383.5px;top:615.63px;font-size:10px;line-height:10px;text-align:right;color:#000;transform:scaleX(1.042);transform-origin:right top;">21,000</div>
<div class="t" style="left:35.2px;top:630.74px;font-size:10px;line-height:10px;color:#000;transform:scaleX(1.042);transform-origin:left top;">Quarter 3</div>
<div class="t" style="left:244.5px;top:630.74px;font-size:10px;line-height:10px;color:#000;transform:scaleX(1.042);transform-origin:left top;">$</div>
<div class="t" style="right:477.5px;top:630.74px;font-size:10px;line-height:10px;text-align:right;color:#000;transform:scaleX(1.042);transform-origin:right top;">89,800.00</div>
<div class="t" style="right:383.5px;top:630.74px;font-size:10px;line-height:10px;text-align:right;color:#000;transform:scaleX(1.042);transform-origin:right top;">13,800</div>
<div class="t" style="left:35.2px;top:645.74px;font-size:10px;line-height:10px;color:#000;transform:scaleX(1.042);transform-origin:left top;">Quarter 4</div>
<div class="t" style="left:244.5px;top:645.74px;font-size:10px;line-height:10px;color:#000;transform:scaleX(1.042);transform-origin:left top;">$</div>
<div class="t" style="right:477.5px;top:645.74px;font-size:10px;line-height:10px;text-align:right;color:#000;transform:scaleX(1.042);transform-origin:right top;">92,600.00</div>
<div class="t" style="right:383.5px;top:645.74px;font-size:10px;line-height:10px;text-align:right;color:#000;transform:scaleX(1.042);transform-origin:right top;">20,000</div>
<div class="t" style="left:27.2px;top:660.84px;font-size:10px;line-height:10px;color:#000;transform:scaleX(1.042);transform-origin:left top;">Year 2</div>
<div class="t" style="left:35.2px;top:675.63px;font-size:10px;line-height:10px;color:#000;transform:scaleX(1.042);transform-origin:left top;">Quarter 1</div>
<div class="t" style="left:244.5px;top:675.63px;font-size:10px;line-height:10px;color:#000;transform:scaleX(1.042);transform-origin:left top;">$</div>
<div class="t" style="right:477.5px;top:675.63px;font-size:10px;line-height:10px;text-align:right;color:#000;transform:scaleX(1.042);transform-origin:right top;">72,500.00</div>
<div class="t" style="right:383.5px;top:675.63px;font-size:10px;line-height:10px;text-align:right;color:#000;transform:scaleX(1.042);transform-origin:right top;">13,700</div>
<div class="t" style="left:35.2px;top:690.63px;font-size:10px;line-height:10px;color:#000;transform:scaleX(1.042);transform-origin:left top;">Quarter2</div>
<div class="t" style="left:244.5px;top:690.63px;font-size:10px;line-height:10px;color:#000;transform:scaleX(1.042);transform-origin:left top;">$</div>
<div class="t" style="right:477.5px;top:690.63px;font-size:10px;line-height:10px;text-align:right;color:#000;transform:scaleX(1.042);transform-origin:right top;">80,000.00</div>
<div class="t" style="right:383.5px;top:690.63px;font-size:10px;line-height:10px;text-align:right;color:#000;transform:scaleX(1.042);transform-origin:right top;">14,000</div>
<div class="t" style="left:35.2px;top:705.74px;font-size:10px;line-height:10px;color:#000;transform:scaleX(1.042);transform-origin:left top;">Quarter 3</div>
<div class="t" style="left:244.5px;top:705.74px;font-size:10px;line-height:10px;color:#000;transform:scaleX(1.042);transform-origin:left top;">$</div>
<div class="t" style="right:477.5px;top:705.74px;font-size:10px;line-height:10px;text-align:right;color:#000;transform:scaleX(1.042);transform-origin:right top;">84,000.00</div>
<div class="t" style="right:383.5px;top:705.74px;font-size:10px;line-height:10px;text-align:right;color:#000;transform:scaleX(1.042);transform-origin:right top;">14,300</div>
<div class="t" style="left:35.2px;top:720.53px;font-size:10px;line-height:10px;color:#000;transform:scaleX(1.042);transform-origin:left top;">Quarter 4</div>
<div class="t" style="left:244.5px;top:720.53px;font-size:10px;line-height:10px;color:#000;transform:scaleX(1.042);transform-origin:left top;">$</div>
<div class="t" style="right:477.5px;top:720.53px;font-size:10px;line-height:10px;text-align:right;color:#000;transform:scaleX(1.042);transform-origin:right top;">100,000.00</div>
<div class="t" style="right:383.5px;top:720.53px;font-size:10px;line-height:10px;text-align:right;color:#000;transform:scaleX(1.042);transform-origin:right top;">22,500</div>
<div class="t" style="left:27.2px;top:752.03px;font-size:10px;line-height:10px;color:#000;transform:scaleX(1.042);transform-origin:left top;">Use the data to answer the following.</div>
<div class="t" style="left:27.2px;top:782.03px;font-size:10px;line-height:10px;color:#000;transform:scaleX(1.042);transform-origin:left top;">1. Using the high-low method, determine a cost formula for shipping expenses.</div>
<div class="r" style="left:7px;top:807px;width:796px;height:1px;background:#b5b5b5;"></div>
<div class="r" style="left:786px;top:308px;width:17px;height:499px;background:#e6e6e6;"></div>
<div class="r" style="left:786px;top:308px;width:17px;height:17px;box-sizing:border-box;border:1px solid #c6c6c6;background:#e6e6e6;"></div>
<div class="r" style="left:786px;top:326px;width:17px;height:211px;box-sizing:border-box;border:1px solid #ababab;background:#fff;"></div>
<div class="r" style="left:786px;top:790px;width:17px;height:17px;box-sizing:border-box;border:1px solid #c6c6c6;background:#e6e6e6;"></div>
<div class="r" style="left:7px;top:808px;width:796px;height:29px;background:#f3f3f3;"></div>
<div class="r" style="left:112px;top:807px;width:72px;height:23px;box-sizing:border-box;border:1px solid #c6c6c6;border-top:none;background:#fff;"></div>
<div class="r" style="left:113px;top:828px;width:70px;height:2px;background:#217346;"></div>
<div class="t" style="left:124.5px;top:812.15px;font-size:14px;line-height:14px;font-weight:bold;color:#217346;transform:scaleX(1.0061);transform-origin:left top;">Sheet1</div>
<div class="r" style="left:484px;top:813px;width:17px;height:17px;box-sizing:border-box;border:1px solid #c6c6c6;background:#e6e6e6;"></div>
<div class="r" style="left:502px;top:813px;width:206px;height:17px;box-sizing:border-box;border:1px solid #ababab;background:#fff;"></div>
<div class="r" style="left:708px;top:813px;width:59px;height:17px;background:#e6e6e6;"></div>
<div class="r" style="left:767px;top:813px;width:17px;height:17px;box-sizing:border-box;border:1px solid #c6c6c6;background:#e6e6e6;"></div>
<div class="r" style="left:7px;top:837px;width:796px;height:22px;background:#217346;"></div>
<div class="t" style="left:17.7px;top:843.11px;font-size:10.5px;line-height:10.5px;font-weight:bold;color:#fff;transform:scaleX(1.0200);transform-origin:left top;">READY</div>
<div class="r" style="left:506px;top:837px;width:38px;height:22px;background:#1b5e38;"></div>
<div class="t" style="right:18px;top:843.27px;font-size:11.5px;line-height:11.5px;text-align:right;font-weight:bold;color:#8cb89c;transform:scaleX(0.9292);transform-origin:right top;">10%</div>
<div class="r" style="left:7px;top:859px;width:796px;height:22px;background:#4cb3c2;"></div>
<div class="r" style="left:7px;top:859px;width:82px;height:20px;background:#000;"></div>
<div class="t" style="left:17.6px;top:862.84px;font-size:12px;line-height:12px;font-weight:bold;color:#fff;transform:scaleX(1.0117);transform-origin:left top;">Attempt(s)</div>
<div class="r" style="left:744px;top:861px;width:50px;height:18px;background:#c8c8c8;border-radius:3px;"></div>
<div class="t" style="left:744.10px;width:50px;top:864.34px;font-size:12px;line-height:12px;text-align:center;font-weight:bold;color:#fff;transform:scaleX(0.9516);transform-origin:center top;">Hint</div>
<div class="r" style="left:7px;top:881px;width:796px;height:1px;background:#fff;"></div>
<div class="r" style="left:8px;top:882px;width:795px;height:32px;background:#000;"></div>
<svg class="r" style="left:10px;top:121px" width="17" height="16" viewBox="0 0 17 16">
<rect x="9" y="1" width="7" height="13" fill="#fff" stroke="#217346" stroke-width="1"/>
<path d="M10.5 3.5h4M10.5 5.5h4M10.5 7.5h4M10.5 9.5h4M10.5 11.5h4" stroke="#217346" stroke-width="1"/>
<path d="M0 1.5 L10 0 L10 16 L0 14.5 Z" fill="#217346"/>
<path d="M2.3 4.2 L3.9 4.2 L5 6.5 L6.1 4.2 L7.7 4.2 L5.9 7.9 L7.8 11.8 L6.2 11.8 L5 9.3 L3.8 11.8 L2.2 11.8 L4.1 7.9 Z" fill="#fff"/>
</svg>
<svg class="r" style="left:37px;top:121px" width="14" height="14" viewBox="0 0 14 14">
<path d="M1 1 H13 V13 H1 Z" fill="none" stroke="#7d3f98" stroke-width="2"/>
<rect x="1" y="6.2" width="12" height="1.8" fill="#7d3f98"/>
<rect x="5" y="10" width="2" height="3" fill="#7d3f98"/>
</svg>
<svg class="r" style="left:61px;top:121px" width="16" height="15" viewBox="0 0 16 15">
<path d="M2.5 4.6 H9.5 A4.2 4.2 0 0 1 9.5 13 H9" fill="none" stroke="#2e6db4" stroke-width="2.2"/>
<path d="M1 4.6 L6.2 0.8 L6.2 8.6 Z" fill="#2e6db4"/>
</svg>
<svg class="r" style="left:82px;top:128px" width="6" height="3" viewBox="0 0 6 3"><path d="M0 0H5.5L2.75 3Z" fill="#6a6a6a"/></svg>
<svg class="r" style="left:98px;top:121px" width="16" height="15" viewBox="0 0 16 15">
<path d="M13.5 4.6 H6.5 A4.2 4.2 0 0 0 6.5 13 H7" fill="none" stroke="#2e6db4" stroke-width="2.2"/>
<path d="M15 4.6 L9.8 0.8 L9.8 8.6 Z" fill="#2e6db4"/>
</svg>
<svg class="r" style="left:119px;top:128px" width="6" height="3" viewBox="0 0 6 3"><path d="M0 0H5.5L2.75 3Z" fill="#6a6a6a"/></svg>
<svg class="r" style="left:139px;top:119px" width="13" height="16" viewBox="0 0 13 16">
<path d="M2.6 6.6 A3.9 3.9 0 1 1 9.4 6.6" fill="none" stroke="#8fb3dc" stroke-width="2"/>
<rect x="5" y="4" width="2" height="8" fill="#555"/>
<path d="M5 9.3 L10 9.6 Q12 9.9 12 12 L12 13.8 Q12 15.6 10.2 15.6 L6 15.6 L1 11.2 Q1.6 10.2 2.8 10.8 L5 12 Z" fill="#555"/>
</svg>
<svg class="r" style="left:157px;top:126px" width="5" height="3" viewBox="0 0 5 3"><path d="M0 0H5L2.5 3Z" fill="#6a6a6a"/></svg>
<div class="r" style="left:173px;top:127px;width:5px;height:1px;background:#6a6a6a;"></div>
<svg class="r" style="left:173px;top:130px" width="5" height="3" viewBox="0 0 5 3"><path d="M0 0H5L2.5 3Z" fill="#6a6a6a"/></svg>
<div class="t" style="left:667.2px;top:123.80px;font-size:13px;line-height:13px;font-weight:bold;color:#555;-webkit-text-stroke:0.3px #555;">?</div>
<svg class="r" style="left:694px;top:125px" width="14" height="10" viewBox="0 0 14 10">
<rect x="0.5" y="0.5" width="13" height="9" fill="none" stroke="#555" stroke-width="1"/>
<rect x="0.5" y="0.5" width="13" height="1.5" fill="#555"/>
<path d="M7 3 L4.2 6.2 H6.2 V9.5 H7.8 V6.2 H9.8 Z" fill="#555"/>
</svg>
<div class="r" style="left:725px;top:131px;width:9px;height:2px;background:#555;"></div>
<svg class="r" style="left:753px;top:125px" width="11" height="10" viewBox="0 0 11 10">
<rect x="3" y="0.7" width="7.3" height="5.8" fill="none" stroke="#555" stroke-width="1.3"/>
<rect x="0.7" y="3.3" width="7.3" height="6" fill="#fff" stroke="#555" stroke-width="1.3"/>
</svg>
<svg class="r" style="left:783px;top:125px" width="10" height="10" viewBox="0 0 10 10"><path d="M0.8 0.8 L9.2 9.2 M9.2 0.8 L0.8 9.2" stroke="#555" stroke-width="2.1"/></svg>
<div class="t" style="left:736.6px;top:149.67px;font-size:11.5px;line-height:11.5px;color:#6e6e6e;transform:scaleX(1.0192);transform-origin:left top;">Sign In</div>
<svg class="r" style="left:775px;top:143px" width="24" height="24" viewBox="0 0 24 24">
<rect x="0" y="0" width="24" height="24" fill="#a8a8a8"/>
<ellipse cx="11.8" cy="7.2" rx="4.7" ry="5.2" fill="#fff"/>
<path d="M3.2 24 Q3 15 9 13.6 Q11.8 14.6 14.6 13.6 Q20.6 15 20.4 24 Z" fill="#fff"/>
</svg>
<svg class="r" style="left:17px;top:175px" width="31" height="33" viewBox="0 0 31 33">
<rect x="1" y="4" width="24" height="25" rx="1.2" fill="#ebba63"/>
<rect x="6" y="4" width="14" height="4" rx="0.6" fill="#6d6d6d"/>
<rect x="10.5" y="1" width="5" height="4" rx="1" fill="#6d6d6d"/>
<rect x="11.8" y="2" width="2.4" height="2" fill="#fff"/>
<path d="M15.5 12.5 H24.5 L29.5 17.5 V31.5 H15.5 Z" fill="#fff" stroke="#6d6d6d" stroke-width="1"/>
<path d="M24.5 12.5 V17.5 H29.5" fill="none" stroke="#6d6d6d" stroke-width="1"/>
</svg>
<div class="t" style="left:18.4px;top:214.53px;font-size:11.3px;line-height:11.3px;color:#333;transform:scaleX(0.9692);transform-origin:left top;">Paste</div>
<svg class="r" style="left:30px;top:229px" width="6" height="3" viewBox="0 0 6 3"><path d="M0 0H5.5L2.75 3Z" fill="#6a6a6a"/></svg>
<svg class="r" style="left:56px;top:175px" width="16" height="16" viewBox="0 0 16 16">
<path d="M3.4 0.5 L10.2 10 M12.6 0.5 L5.8 10" stroke="#555" stroke-width="1.7"/>
<circle cx="4.2" cy="12.3" r="2.5" fill="none" stroke="#3d7fc4" stroke-width="1.1"/>
<circle cx="11.8" cy="12.3" r="2.5" fill="none" stroke="#3d7fc4" stroke-width="1.1"/>
</svg>
<svg class="r" style="left:57px;top:199px" width="16" height="15" viewBox="0 0 16 15">
<path d="M0.5 0.5 H5.5 L7 2 V10.5 H0.5 Z" fill="#fff" stroke="#555" stroke-width="1"/>
<path d="M2 4.5h2.5M2 6.5h2.5M2 8.5h2.5" stroke="#2e6db4" stroke-width="1"/>
<path d="M6.5 3.5 H12 L14.5 6 V14.5 H6.5 Z" fill="#fff" stroke="#555" stroke-width="1"/>
<path d="M12 3.5 V6 H14.5" fill="none" stroke="#555" stroke-width="0.8"/>
<path d="M8 7.5h4M8 9.5h5M8 11.5h5" stroke="#2e6db4" stroke-width="1"/>
</svg>
<svg class="r" style="left:78px;top:206px" width="5" height="3" viewBox="0 0 5 3"><path d="M0 0H5L2.5 3Z" fill="#6a6a6a"/></svg>
<svg class="r" style="left:56px;top:221px" width="17" height="14" viewBox="0 0 17 14">
<path d="M0.5 8.5 L6 4 L10 8 L5 13.5 Z" fill="#d8d8d8"/>
<path d="M6.5 3.5 L10 0.5 L13.5 4 L10.5 7.5 Z" fill="#b9b9b9"/>
<path d="M11 1.5 L14 -0.5 L16.5 2 L13.5 4.5 Z" fill="#c9c9c9"/>
</svg>
<div class="t" style="left:19.8px;top:247.51px;font-size:10.5px;line-height:10.5px;color:#444;transform:scaleX(1.0233);transform-origin:left top;">Clipboard</div>
<svg class="r" style="left:82px;top:249px" width="7" height="7" viewBox="0 0 7 7"><path d="M0.5 6.5 V0.5 H6.5" fill="none" stroke="#aaa" stroke-width="1"/><path d="M2.5 2.5 L6.5 6.5 M6.5 3.5 V6.5 H3.5" fill="none" stroke="#aaa" stroke-width="1"/></svg>
<div class="r" style="left:92px;top:173px;width:1px;height:84px;background:#e1e1e1;"></div>
<div class="r" style="left:97px;top:180px;width:109px;height:23px;box-sizing:border-box;border:1px solid #ababab;background:#fff;"></div>
<div class="r" style="left:205px;top:180px;width:43px;height:23px;box-sizing:border-box;border:1px solid #ababab;background:#fff;"></div>
<div class="t" style="left:100px;top:185.29px;font-size:11px;line-height:11px;color:#222;transform:scaleX(1.0100);transform-origin:left top;">Calibri</div>
<svg class="r" style="left:195px;top:190px" width="5" height="3" viewBox="0 0 5 3"><path d="M0 0H5L2.5 3Z" fill="#8a8a8a"/></svg>
<div class="t" style="left:208.5px;top:185.29px;font-size:11px;line-height:11px;color:#222;">11</div>
<svg class="r" style="left:238px;top:190px" width="5" height="3" viewBox="0 0 5 3"><path d="M0 0H5L2.5 3Z" fill="#8a8a8a"/></svg>
<div class="t" style="left:252.5px;top:185.17px;font-size:13.5px;line-height:13.5px;color:#444;">A</div>
<svg class="r" style="left:261px;top:184px" width="5" height="3" viewBox="0 0 5 3"><path d="M0 3H5L2.5 0Z" fill="#2e6db4"/></svg>
<div class="t" style="left:274.5px;top:188.13px;font-size:10px;line-height:10px;color:#444;">A</div>
<svg class="r" style="left:282px;top:184px" width="5" height="3" viewBox="0 0 5 3"><path d="M0 0H5L2.5 3Z" fill="#2e6db4"/></svg>
<div class="t" style="left:104.5px;top:215.97px;font-size:11.5px;line-height:11.5px;font-weight:bold;color:#444;">B</div>
<svg class="r" style="left:126px;top:217px" width="9" height="10" viewBox="0 0 9 10"><path d="M3.2 0.8 H8.5 M0.5 8.7 H5.8 M6.2 0.8 L2.8 8.7" stroke="#444" stroke-width="1.5" fill="none"/></svg>
<div class="t" style="left:147px;top:215.97px;font-size:11.5px;line-height:11.5px;font-weight:bold;color:#444;">U</div>
<div class="r" style="left:147px;top:227px;width:9px;height:1.3px;background:#444;"></div>
<svg class="r" style="left:165px;top:221px" width="5" height="3" viewBox="0 0 5 3"><path d="M0 0H5L2.5 3Z" fill="#6a6a6a"/></svg>
<div class="r" style="left:179px;top:211px;width:1px;height:22px;background:#e1e1e1;"></div>
<svg class="r" style="left:188px;top:216px" width="13" height="13" viewBox="0 0 13 13">
<path d="M0 0.5 H13 M0 6.5 H13 M0.5 0 V12 M6.5 0 V12 M12.5 0 V12" stroke="#c8c8c8" stroke-width="1" stroke-dasharray="1 1"/>
<path d="M0 12.5 H13" stroke="#b0b0b0" stroke-width="1"/>
</svg>
<svg class="r" style="left:208px;top:221px" width="5" height="3" viewBox="0 0 5 3"><path d="M0 0H5L2.5 3Z" fill="#c8c8c8"/></svg>
<div class="r" style="left:222px;top:211px;width:1px;height:22px;background:#e1e1e1;"></div>
<svg class="r" style="left:226px;top:213px" width="17" height="17" viewBox="0 0 17 17">
<path d="M2 7 L7 2 L12 7 L7 12 Z" fill="#fff" stroke="#bdbdbd" stroke-width="1.2"/>
<path d="M7 0.5 V6" stroke="#bdbdbd" stroke-width="1.1"/>
<path d="M12 7 Q14.5 6 15 9" fill="none" stroke="#bdbdbd" stroke-width="1.3"/>
<rect x="0" y="13.5" width="16" height="3.5" fill="#cfcfcf"/>
</svg>
<svg class="r" style="left:248px;top:221px" width="5" height="3" viewBox="0 0 5 3"><path d="M0 0H5L2.5 3Z" fill="#c8c8c8"/></svg>
<div class="t" style="left:261.5px;top:214.57px;font-size:13.5px;line-height:13.5px;color:#333;">A</div>
<div class="r" style="left:260.5px;top:226px;width:15.5px;height:4px;background:#000;"></div>
<svg class="r" style="left:282px;top:221px" width="5" height="3" viewBox="0 0 5 3"><path d="M0 0H5L2.5 3Z" fill="#6a6a6a"/></svg>
<div class="t" style="left:177.2px;top:248.01px;font-size:10.5px;line-height:10.5px;color:#444;transform:scaleX(1.0230);transform-origin:left top;">Font</div>
<svg class="r" style="left:286px;top:249px" width="7" height="7" viewBox="0 0 7 7"><path d="M0.5 6.5 V0.5 H6.5" fill="none" stroke="#aaa" stroke-width="1"/><path d="M2.5 2.5 L6.5 6.5 M6.5 3.5 V6.5 H3.5" fill="none" stroke="#aaa" stroke-width="1"/></svg>
<div class="r" style="left:296px;top:173px;width:1px;height:84px;background:#e1e1e1;"></div>
<div class="r" style="left:314px;top:175px;width:30px;height:30px;box-sizing:border-box;border:1px solid #c6c6c6;background:#fff;"></div>
<div class="r" style="left:322px;top:184px;width:14px;height:1px;background:#444;"></div>
<div class="r" style="left:324px;top:189px;width:10px;height:1px;background:#444;"></div>
<div class="r" style="left:322px;top:193px;width:14px;height:1px;background:#444;"></div>
<div class="t" style="left:300.8px;top:215.23px;font-size:11.3px;line-height:11.3px;color:#333;transform:scaleX(1.1005);transform-origin:left top;">Alignment</div>
<svg class="r" style="left:326px;top:231px" width="5" height="3" viewBox="0 0 5 3"><path d="M0 0H5L2.5 3Z" fill="#8a8a8a"/></svg>
<div class="r" style="left:360px;top:173px;width:1px;height:85px;background:#e1e1e1;"></div>
<div class="r" style="left:372px;top:175px;width:30px;height:30px;box-sizing:border-box;border:1px solid #c6c6c6;background:#fff;"></div>
<div class="t" style="left:380.5px;top:184.15px;font-size:14px;line-height:14px;color:#333;">%</div>
<div class="t" style="left:364.6px;top:215.23px;font-size:11.3px;line-height:11.3px;color:#333;transform:scaleX(1.0899);transform-origin:left top;">Number</div>
<svg class="r" style="left:384px;top:231px" width="5" height="3" viewBox="0 0 5 3"><path d="M0 0H5L2.5 3Z" fill="#8a8a8a"/></svg>
<div class="r" style="left:412px;top:173px;width:1px;height:85px;background:#e1e1e1;"></div>
<svg class="r" style="left:437px;top:175px" width="32" height="31" viewBox="0 0 32 31">
<g stroke="#a8a8a8" stroke-width="1" fill="none">
<rect x="1.5" y="1.5" width="27" height="24"/>
<path d="M8.5 1.5V25.5 M14.5 1.5V25.5 M21.5 1.5V25.5 M1.5 7.5H28.5 M1.5 13.5H28.5 M1.5 19.5H28.5"/>
</g>
<rect x="9" y="2" width="5.5" height="5.5" fill="#b4b4b4"/>
<rect x="9" y="8" width="11.5" height="5.5" fill="#b4b4b4"/>
<rect x="9" y="14" width="9.5" height="5.5" fill="#b4b4b4"/>
<rect x="9" y="20" width="4.5" height="5.5" fill="#b4b4b4"/>
<rect x="15.5" y="18.5" width="15" height="12" fill="#fff" stroke="#a8a8a8" stroke-width="1"/>
<path d="M19.5 23.2H26.5 M19.5 26H26.5 M25 21 L21 28.5" stroke="#777" stroke-width="0.9"/>
</svg>
<div class="t" style="left:423.2px;top:211.57px;font-size:11.5px;line-height:11.5px;color:#73739a;transform:scaleX(1.0478);transform-origin:left top;">Conditional</div>
<div class="t" style="left:419px;top:225.57px;font-size:11.5px;line-height:11.5px;color:#73739a;transform:scaleX(1.0588);transform-origin:left top;">Formatting</div>
<svg class="r" style="left:480px;top:228px" width="5" height="3" viewBox="0 0 5 3"><path d="M0 0H5L2.5 3Z" fill="#c0c0cc"/></svg>
<svg class="r" style="left:504px;top:177px" width="32" height="30" viewBox="0 0 32 30">
<g stroke="#a8a8a8" stroke-width="1" fill="none">
<rect x="1.5" y="1.5" width="24" height="20"/>
</g>
<rect x="8" y="7" width="17" height="14" fill="#e0e0e0"/>
<g stroke="#a8a8a8" stroke-width="1" fill="none">
<path d="M7.5 1.5V21.5 M13.5 1.5V21.5 M19.5 1.5V21.5 M1.5 6.5H25.5 M1.5 11.5H25.5 M1.5 16.5H25.5"/>
</g>
<path d="M30.5 5.5 L30.5 12 L24 18.5 L20.5 15.5 Z" fill="#b0b0b0" stroke="#fff" stroke-width="0.8"/>
<path d="M20 16 L23.5 19.5 L21.5 21.5 L18 18 Z" fill="#b0b0b0" stroke="#fff" stroke-width="0.8"/>
<path d="M17.5 18.5 Q20.5 19 20.5 23 Q19 27.5 8 28.5 Q11 24.5 12.5 21 Q14 18 17.5 18.5 Z" fill="#b0b0b0" stroke="#fff" stroke-width="0.8"/>
</svg>
<div class="t" style="left:492.1px;top:211.57px;font-size:11.5px;line-height:11.5px;color:#73739a;transform:scaleX(1.0103);transform-origin:left top;">Format as</div>
<div class="t" style="left:498.8px;top:225.57px;font-size:11.5px;line-height:11.5px;color:#73739a;transform:scaleX(1.0473);transform-origin:left top;">Table</div>
<svg class="r" style="left:531px;top:228px" width="5" height="3" viewBox="0 0 5 3"><path d="M0 0H5L2.5 3Z" fill="#c0c0cc"/></svg>
<svg class="r" style="left:554px;top:175px" width="32" height="30" viewBox="0 0 32 30">
<rect x="7" y="6.5" width="14" height="10.5" fill="#e0e0e0"/>
<g stroke="#a8a8a8" stroke-width="1" fill="none">
<rect x="1.5" y="1.5" width="25" height="21"/>
<path d="M6.5 1.5V22.5 M20.5 1.5V22.5 M1.5 6.5H26.5 M1.5 17.5H26.5"/>
</g>
<path d="M30.5 7 L30.5 13.5 L24 20 L20.5 17 Z" fill="#b0b0b0" stroke="#fff" stroke-width="0.8"/>
<path d="M20 17.5 L23.5 21 L21.5 23 L18 19.5 Z" fill="#b0b0b0" stroke="#fff" stroke-width="0.8"/>
<path d="M17.5 20 Q20.5 20.5 20.5 24.5 Q19 28.5 8 29.5 Q11 26 12.5 22.5 Q14 19.5 17.5 20 Z" fill="#b0b0b0" stroke="#fff" stroke-width="0.8"/>
</svg>
<div class="t" style="left:557.6px;top:211.57px;font-size:11.5px;line-height:11.5px;color:#73739a;transform:scaleX(1.0246);transform-origin:left top;">Cell</div>
<div class="t" style="left:547.1px;top:225.57px;font-size:11.5px;line-height:11.5px;color:#73739a;transform:scaleX(0.9831);transform-origin:left top;">Styles</div>
<svg class="r" style="left:581px;top:228px" width="5" height="3" viewBox="0 0 5 3"><path d="M0 0H5L2.5 3Z" fill="#c0c0cc"/></svg>
<div class="t" style="left:489.3px;top:248.11px;font-size:10.5px;line-height:10.5px;color:#444;transform:scaleX(0.9687);transform-origin:left top;">Styles</div>
<div class="r" style="left:593px;top:173px;width:1px;height:85px;background:#e1e1e1;"></div>
<div class="r" style="left:601px;top:175px;width:30px;height:30px;box-sizing:border-box;border:1px solid #c6c6c6;background:#fff;"></div>
<svg class="r" style="left:608px;top:181px" width="16" height="18" viewBox="0 0 16 18">
<path d="M1.5 1 V3.5 M14.5 1 V3.5 M2.5 2.2 H13.5" stroke="#2e6db4" stroke-width="1"/>
<path d="M2.5 2.2 L4.5 0.8 V3.6 Z M13.5 2.2 L11.5 0.8 V3.6 Z" fill="#2e6db4"/>
<g stroke="#666" stroke-width="1" fill="none">
<rect x="1.5" y="5.5" width="13" height="10"/>
<path d="M5.5 5.5V15.5 M9.5 5.5V15.5 M1.5 8.5H14.5 M1.5 12H14.5"/>
<path d="M2 16.5 H7 M9 16.5 H14"/>
</g>
<rect x="4.5" y="8" width="5" height="4.5" fill="#2e6db4"/>
</svg>
<div class="t" style="left:603.2px;top:215.23px;font-size:11.3px;line-height:11.3px;color:#333;transform:scaleX(1.0076);transform-origin:left top;">Cells</div>
<svg class="r" style="left:614px;top:231px" width="5" height="3" viewBox="0 0 5 3"><path d="M0 0H5L2.5 3Z" fill="#8a8a8a"/></svg>
<div class="r" style="left:638px;top:173px;width:1px;height:85px;background:#e1e1e1;"></div>
<div class="r" style="left:652px;top:175px;width:30px;height:30px;box-sizing:border-box;border:1px solid #c6c6c6;background:#fff;"></div>
<svg class="r" style="left:659px;top:183px" width="15" height="14" viewBox="0 0 15 14">
<rect x="2.5" y="0.5" width="3.5" height="3" fill="#555"/>
<rect x="9" y="0.5" width="3.5" height="3" fill="#555"/>
<path d="M1.5 3 H7 V8 H8 V3 H13.5 L14.5 7 V13.5 H9 V9.5 H6 V13.5 H0.5 V7 Z" fill="#555"/>
<rect x="1.8" y="8.5" width="1.4" height="4" fill="#fff"/>
<rect x="11.8" y="8.5" width="1.4" height="4" fill="#fff"/>
</svg>
<div class="t" style="left:648.2px;top:215.23px;font-size:11.3px;line-height:11.3px;color:#333;transform:scaleX(1.0710);transform-origin:left top;">Editing</div>
<svg class="r" style="left:664px;top:231px" width="5" height="3" viewBox="0 0 5 3"><path d="M0 0H5L2.5 3Z" fill="#8a8a8a"/></svg>
<div class="r" style="left:695px;top:173px;width:1px;height:85px;background:#e1e1e1;"></div>
<svg class="r" style="left:784px;top:251px" width="10" height="6" viewBox="0 0 10 6"><path d="M1 5 L5 1 L9 5" fill="none" stroke="#555" stroke-width="1.6"/></svg>
<svg class="r" style="left:128px;top:283px" width="8" height="6" viewBox="0 0 8 6"><path d="M1 1 L4 4.5 L7 1" fill="none" stroke="#555" stroke-width="1.8"/></svg>
<div class="r" style="left:153px;top:281px;width:1.5px;height:1.5px;background:#999;"></div>
<div class="r" style="left:153px;top:284.5px;width:1.5px;height:1.5px;background:#999;"></div>
<div class="r" style="left:153px;top:288px;width:1.5px;height:1.5px;background:#999;"></div>
<svg class="r" style="left:182px;top:279px" width="12" height="11" viewBox="0 0 12 11"><path d="M1 1 L11 10 M11 1 L1 10" stroke="#6a6a6a" stroke-width="1.4"/></svg>
<svg class="r" style="left:218px;top:279px" width="13" height="11" viewBox="0 0 13 11"><path d="M1 5.5 L4.8 9.5 L12 1.5" fill="none" stroke="#6a6a6a" stroke-width="2.2"/></svg>
<div class="t" style="left:254px;top:276.07px;font-size:13.5px;line-height:13.5px;font-weight:bold;color:#555;font-family:"Liberation Serif",serif;letter-spacing:-0.5px;"><i>f</i><span style="font-size:10.5px;font-style:italic;position:relative;top:0.5px">x</span></div>
<svg class="r" style="left:783px;top:282px" width="8" height="6" viewBox="0 0 8 6"><path d="M1 1 L4 4.5 L7 1" fill="none" stroke="#555" stroke-width="1.8"/></svg>
<svg class="r" style="left:789px;top:313px" width="11" height="6" viewBox="0 0 11 6"><path d="M0.5 5.5 H10.5 L5.5 0.5 Z" fill="#777"/></svg>
<svg class="r" style="left:789px;top:795px" width="11" height="6" viewBox="0 0 11 6"><path d="M0.5 0.5 H10.5 L5.5 5.5 Z" fill="#777"/></svg>
<svg class="r" style="left:489px;top:817px" width="6" height="10" viewBox="0 0 6 10"><path d="M5.5 0.5 V9.5 L0.5 5 Z" fill="#777"/></svg>
<svg class="r" style="left:773px;top:817px" width="6" height="10" viewBox="0 0 6 10"><path d="M0.5 0.5 V9.5 L5.5 5 Z" fill="#777"/></svg>
<svg class="r" style="left:37px;top:817px" width="5" height="8" viewBox="0 0 5 8"><path d="M4.5 0.5 V7.5 L0.5 4 Z" fill="#217346"/></svg>
<svg class="r" style="left:66.5px;top:817px" width="5" height="8" viewBox="0 0 5 8"><path d="M0.5 0.5 V7.5 L4.5 4 Z" fill="#217346"/></svg>
<div class="r" style="left:92.5px;top:822px;width:2.2px;height:2.2px;background:#217346;"></div>
<div class="r" style="left:96.5px;top:822px;width:2.2px;height:2.2px;background:#217346;"></div>
<div class="r" style="left:100.5px;top:822px;width:2.2px;height:2.2px;background:#217346;"></div>
<div class="r" style="left:192.5px;top:822px;width:2.2px;height:2.2px;background:#444;"></div>
<div class="r" style="left:196.5px;top:822px;width:2.2px;height:2.2px;background:#444;"></div>
<div class="r" style="left:200.5px;top:822px;width:2.2px;height:2.2px;background:#444;"></div>
<svg class="r" style="left:217px;top:814px" width="18" height="16" viewBox="0 0 18 16"><circle cx="8.5" cy="7.5" r="7" fill="none" stroke="#777" stroke-width="1.3"/><path d="M8.5 3.5 V11.5 M4.5 7.5 H12.5" stroke="#777" stroke-width="1.5"/></svg>
<svg class="r" style="left:517px;top:841px" width="14" height="13" viewBox="0 0 14 13"><g stroke="#fff" stroke-width="1.4" fill="none"><rect x="1.2" y="0.7" width="12" height="11.6"/><path d="M5.2 0.7V12.3 M9.2 0.7V12.3 M1.2 4.6H13.2 M1.2 8.5H13.2"/></g></svg>
<svg class="r" style="left:556px;top:841px" width="14" height="13" viewBox="0 0 14 13"><g stroke="#fff" fill="none"><rect x="0.7" y="0.7" width="12.6" height="11.6" stroke-width="1.3"/><rect x="3.6" y="2.8" width="6.8" height="7.4" stroke-width="1.1"/><path d="M5.2 4.9H8.8 M5.2 6.5H8.8 M5.2 8.1H8.8" stroke-width="0.9"/></g></svg>
<svg class="r" style="left:594px;top:841px" width="15" height="13" viewBox="0 0 15 13"><g stroke="#fff" fill="none" stroke-width="1.3"><rect x="0.7" y="0.7" width="13.4" height="11.6"/></g><rect x="0.7" y="0.7" width="4" height="7.6" fill="#fff"/><rect x="5.6" y="0.7" width="3.4" height="7.6" fill="#fff"/><rect x="0.7" y="7.5" width="8.3" height="1.3" fill="#fff"/></svg>
<div class="r" style="left:628px;top:847px;width:6px;height:2px;background:#195c35;"></div>
<div class="r" style="left:638px;top:847px;width:100px;height:1px;background:#a9c9b5;"></div>
<div class="r" style="left:688px;top:844px;width:1px;height:8px;background:#a9c9b5;"></div>
<svg class="r" style="left:742px;top:844px" width="9" height="9" viewBox="0 0 9 9"><path d="M4.5 0 V9 M0 4.5 H9" stroke="#195c35" stroke-width="2"/></svg>
</body></html>
